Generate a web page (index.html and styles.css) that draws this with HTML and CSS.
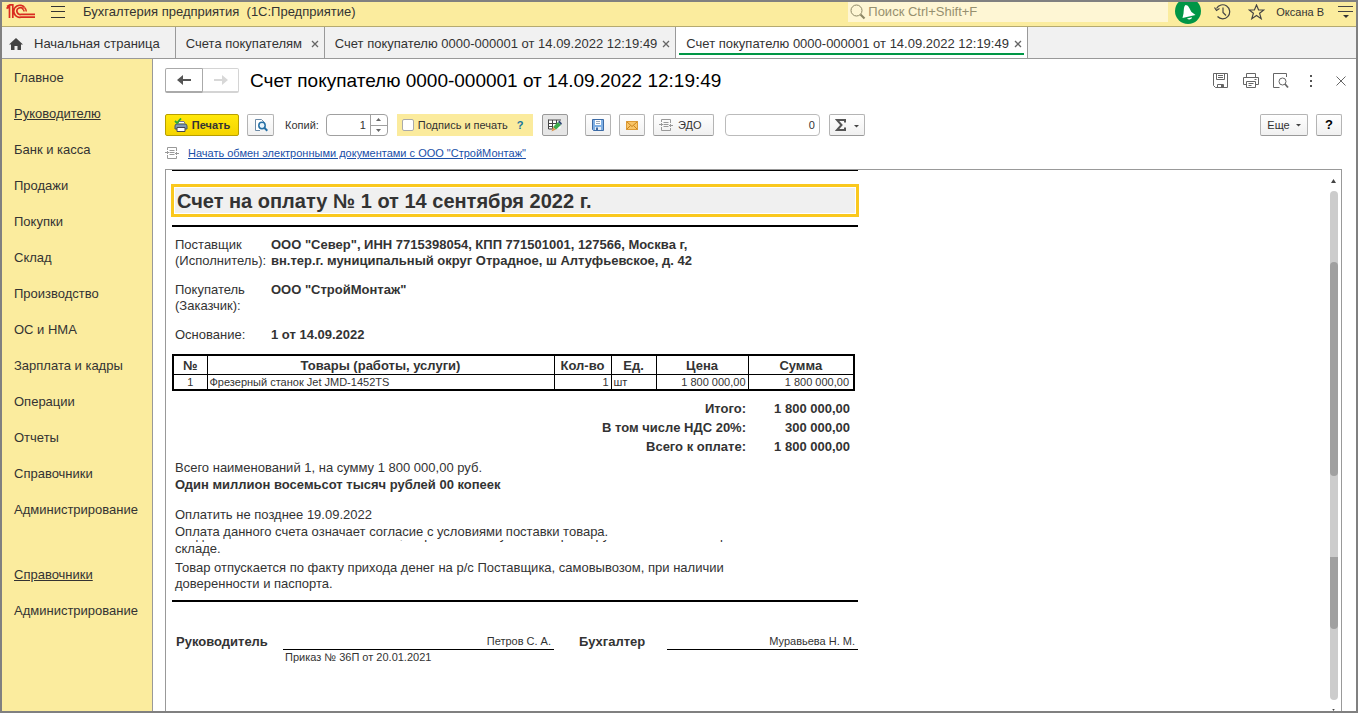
FILE: index.html
```html
<!DOCTYPE html>
<html lang="ru">
<head>
<meta charset="utf-8">
<title>Бухгалтерия предприятия</title>
<link rel="stylesheet" href="styles.css">
</head>
<body>
<svg class="defs" aria-hidden="true">
  <symbol id="i-edo" viewBox="0 0 14 12"><path d="M2.500 3V.5h9V4M2.500 8v3.500h9V9M4.500 3.500h5M4.500 5.500h5M4.500 7.500h5M0 5.500h4M10 6.500h4M2.500 4v3M11.500 5v3" fill="none" stroke="#999"/></symbol>
  <symbol id="i-close" viewBox="0 0 8 8"><path d="M1 1l6 6M7 1L1 7" fill="none" stroke="#666" stroke-width="1.300"/></symbol>
</svg>
<div class="app">
  <header class="topbar">
    <svg class="logo" width="30" height="16" viewBox="0 0 30 16"><g fill="none" stroke="#d92b20" stroke-width="1.700"><path d="M.5 4.500L3.500 2.500V14M6.800 14V.800H4L1 2.500M18.500 3.500A6 6 0 1 0 15 13.200H29M17.300 5.500A3.400 3.400 0 1 0 15 10.400H29"/><path d="M20.300 7.500A6 6 0 0 0 18.500 3.500M17.300 5.500a3 3 0 0 1 .7 2" stroke-width="1.500"/></g></svg>
    <button class="plain" aria-label="Меню"><svg width="14" height="12" viewBox="0 0 14 12"><path d="M0 .5h14M0 5.500h14M0 11.500h14" stroke="#333"/></svg></button>
    <div class="app-name">Бухгалтерия предприятия &nbsp;(1С:Предприятие)</div>
    <label class="search"><svg width="16" height="16" viewBox="0 0 16 16"><circle cx="6.500" cy="6.500" r="5.500" fill="none" stroke="#8d8765"/><path d="M10.500 10.500l4 4" stroke="#8d8765" stroke-width="2.200"/></svg><input type="text" placeholder="Поиск Ctrl+Shift+F" aria-label="Поиск"></label>
    <button class="bell" aria-label="Уведомления"><svg width="26" height="24" viewBox="0 0 26 24"><circle cx="13" cy="9" r="13" fill="#009646"/><path d="M10.500 3C8.500 4.500 9 8 8.500 11.500L7.500 16L20.500 13L16.500 10C14.500 6.500 13.500 3 10.500 3zM12 16.500l5-1.200c0 2.200-3.500 3-5 1.200z" fill="#fff"/></svg></button>
    <button class="plain history" aria-label="История"><svg width="17" height="16" viewBox="0 0 17 16"><g fill="none" stroke="#444" stroke-width="1.200"><path d="M2.500 4.500A7 7 0 1 1 3.500 12.500M.5 3.500l2 3 3-2M9 3.500V8.500l3 3"/></g></svg></button>
    <button class="plain star" aria-label="Избранное"><svg width="17" height="16" viewBox="0 0 17 16"><path d="M8.500 1l2.100 5h5.200l-4.200 3.300 1.600 5.400-4.700-3.200-4.700 3.200 1.600-5.400L1.200 6h5.200z" fill="none" stroke="#444" stroke-width="1.200"/></svg></button>
    <span class="user">Оксана В</span>
    <button class="plain" aria-label="Сервис"><svg width="15" height="14" viewBox="0 0 15 14"><path d="M0 1.500h15M0 6.500h15" stroke="#444"/><path d="M5 10h6L8 13z" fill="#333"/></svg></button>
  </header>

  <nav class="tabs">
    <a class="tab home" href="#"><svg width="14" height="12" viewBox="0 0 14 12"><path d="M7 0L0 6.500h2V12h3.500V8h3v4H12V6.500h2z" fill="#444"/></svg><span>Начальная страница</span></a>
    <a class="tab" href="#"><span>Счета покупателям</span><svg width="8" height="8"><use href="#i-close"/></svg></a>
    <a class="tab" href="#"><span>Счет покупателю 0000-000001 от 14.09.2022 12:19:49</span><svg width="8" height="8"><use href="#i-close"/></svg></a>
    <a class="tab active" href="#"><span>Счет покупателю 0000-000001 от 14.09.2022 12:19:49</span><svg width="8" height="8"><use href="#i-close"/></svg></a>
  </nav>

  <div class="body">
    <nav class="sidebar">
      <a href="#">Главное</a>
      <a href="#" class="underlined">Руководителю</a>
      <a href="#">Банк и касса</a>
      <a href="#">Продажи</a>
      <a href="#">Покупки</a>
      <a href="#">Склад</a>
      <a href="#">Производство</a>
      <a href="#">ОС и НМА</a>
      <a href="#">Зарплата и кадры</a>
      <a href="#">Операции</a>
      <a href="#">Отчеты</a>
      <a href="#">Справочники</a>
      <a href="#">Администрирование</a>
      <a href="#" class="underlined second">Справочники</a>
      <a href="#">Администрирование</a>
    </nav>

    <main class="main">
      <div class="title-row">
        <div class="history-nav">
          <button aria-label="Назад"><svg width="14" height="10" viewBox="0 0 14 10"><path d="M0 5l6-5v4h8v2H6v4z" fill="#555"/></svg></button>
          <button aria-label="Вперед" disabled><svg width="14" height="10" viewBox="0 0 14 10"><path d="M14 5L8 0v4H0v2h8v4z" fill="#d8d8d8"/></svg></button>
        </div>
        <h1>Счет покупателю 0000-000001 от 14.09.2022 12:19:49</h1>
        <div class="window-tools">
          <button class="plain" aria-label="Сохранить"><svg width="16" height="16" viewBox="0 0 16 16"><path d="M.5.5h14v14h-12l-2-2zM3.500.5v6h8v-6M5 2.500h5M5 4.500h5M4.500 14.500v-3h6v3" fill="none" stroke="#666"/><path d="M8 12h2v2H8z" fill="#666"/></svg></button>
          <button class="plain" aria-label="Печать"><svg width="16" height="16" viewBox="0 0 16 16"><path d="M3.500 4.500v-4h9v4M3.500 11.500H.5v-7h15v7h-3M3.500 8.500h9v6h-9zM5.500 10.500h5M5.500 12.500h3M11.500 6.500h2" fill="none" stroke="#666"/></svg></button>
          <button class="plain" aria-label="Просмотр"><svg width="16" height="16" viewBox="0 0 16 16"><path d="M13.500 4V.5H.5v14h6" fill="none" stroke="#666"/><circle cx="9.500" cy="8.500" r="3.500" fill="none" stroke="#666"/><path d="M12 11l3 3.500" stroke="#666" stroke-width="1.800"/></svg></button>
          <button class="plain dots" aria-label="Еще"><svg width="4" height="12" viewBox="0 0 4 12"><path d="M1 0h2v2H1zM1 5h2v2H1zM1 10h2v2H1z" fill="#555"/></svg></button>
          <button class="plain shut" aria-label="Закрыть"><svg width="10" height="10" viewBox="0 0 10 10"><path d="M.5.5l9 9M9.500.5l-9 9" stroke="#666"/></svg></button>
        </div>
      </div>

      <div class="toolbar">
        <button class="btn print"><svg width="14" height="14" viewBox="0 0 14 14"><path d="M4 5.500L5 3.500h5l1 2" fill="#fff" stroke="#778"/><path d="M1 8q0-2 2-2h8q2 0 2 2v3H1z" fill="#7f99b2" stroke="#40566c"/><path d="M3 9.500h8v4H3z" fill="#fff" stroke="#445"/><path d="M1 3l2 2 4-4.500" fill="none" stroke="#27ab35" stroke-width="1.800"/></svg>Печать</button>
        <button class="btn preview" aria-label="Предварительный просмотр"><svg width="14" height="14" viewBox="0 0 14 14"><path d="M6 12.500H1.500V1.500h6l3 3" fill="#fff" stroke="#6c8aa6"/><circle cx="8" cy="7.500" r="3.200" fill="#e6f3fb" stroke="#246fa5" stroke-width="1.500"/><path d="M10.300 9.800l3 3" stroke="#246fa5" stroke-width="2"/></svg></button>
        <label class="copies-label" for="copies">Копий:</label>
        <div class="spinner"><input id="copies" type="text" value="1"><div class="steps"><button aria-label="Больше"><svg width="5" height="3" viewBox="0 0 5 3"><path d="M0 3L2.500 0 5 3z" fill="#666"/></svg></button><button aria-label="Меньше"><svg width="5" height="3" viewBox="0 0 5 3"><path d="M0 0l2.500 3L5 0z" fill="#666"/></svg></button></div></div>
        <div class="sign"><label><input type="checkbox">Подпись и печать</label><button class="plain hint">?</button></div>
        <button class="btn icon pressed" aria-label="Редактирование"><svg width="14" height="14" viewBox="0 0 14 14"><path d="M.5 1.500h12v9H.5z" fill="#fff"/><path d="M.5 2h12.500M.5 5.500H9M.5 8.500H5M.5 1.500v9.500M4.500 2v9M8.500 2v4M.5 11h4" fill="none" stroke="#444"/><path d="M5 9l5-5 3 3-5 4.500z" fill="#3dac4c"/><path d="M5 9l3 2.500L3.500 13.500z" fill="#d99650"/><path d="M10 4l1.500-1.500 2.500 3L13 7z" fill="#354b78"/></svg></button>
        <button class="btn icon save" aria-label="Сохранить"><svg width="12" height="12" viewBox="0 0 12 12"><path d="M.5.5h11v11h-10l-1-1z" fill="#7fb0e4" stroke="#3c6ba6"/><path d="M3 1h6v5H3z" fill="#fff"/><path d="M4 2.500h4M4 4.500h4" stroke="#9ab"/><path d="M3 8h6v3H3z" fill="#e7edf4"/><path d="M4 8.500h2V11H4z" fill="#3c6ba6"/></svg></button>
        <button class="btn icon" aria-label="Отправить"><svg width="12" height="9" viewBox="0 0 12 9"><path d="M.5.5h11v8H.5z" fill="#f9c466" stroke="#dd9a34"/><path d="M.5.5L6 5.500 11.500.5M.5 8.500L4.500 4.500M11.500 8.500L7.500 4.500" fill="none" stroke="#c98520"/></svg></button>
        <button class="btn edo"><svg width="14" height="12"><use href="#i-edo"/></svg>ЭДО</button>
        <input class="sum" type="text" value="0" aria-label="Сумма">
        <button class="btn sigma" aria-label="Сумма"><svg width="24" height="12" viewBox="0 0 24 12"><path d="M10 3.500V1H2l4.500 5L2 11h8V8.500" fill="none" stroke="#555" stroke-width="2"/><path d="M19 6h5l-2.500 2.500z" fill="#444"/></svg></button>
        <button class="btn more">Еще<svg width="5" height="3" viewBox="0 0 5 3"><path d="M0 0h5L2.500 2.500z" fill="#444"/></svg></button>
        <button class="btn icon help">?</button>
      </div>

      <div class="exchange"><svg width="14" height="12"><use href="#i-edo"/></svg><a href="#">Начать обмен электронными документами с ООО "СтройМонтаж"</a></div>

      <section class="viewer">
        <article class="sheet">
          <h2>Счет на оплату № 1 от 14 сентября 2022 г.</h2>
          <dl class="parties">
            <dt>Поставщик<br>(Исполнитель):</dt><dd>ООО "Север", ИНН 7715398054, КПП 771501001, 127566, Москва г,<br>вн.тер.г. муниципальный округ Отрадное, ш Алтуфьевское, д. 42</dd>
            <dt>Покупатель<br>(Заказчик):</dt><dd>ООО "СтройМонтаж"</dd>
            <dt>Основание:</dt><dd>1 от 14.09.2022</dd>
          </dl>
          <table class="goods">
            <colgroup><col class="c-num"><col><col class="c-qty"><col class="c-unit"><col class="c-price"><col class="c-total"></colgroup>
            <thead><tr><th>№</th><th>Товары (работы, услуги)</th><th>Кол-во</th><th>Ед.</th><th>Цена</th><th>Сумма</th></tr></thead>
            <tbody><tr><td class="mid">1</td><td>Фрезерный станок Jet JMD-1452TS</td><td class="num">1</td><td>шт</td><td class="num">1 800 000,00</td><td class="num wide">1 800 000,00</td></tr></tbody>
          </table>
          <dl class="totals">
            <dt>Итого:</dt><dd>1 800 000,00</dd>
            <dt>В том числе НДС 20%:</dt><dd>300 000,00</dd>
            <dt>Всего к оплате:</dt><dd>1 800 000,00</dd>
          </dl>
          <div class="summary">
            <p>Всего наименований 1, на сумму 1 800 000,00 руб.</p>
            <p class="words">Один миллион восемьсот тысяч рублей 00 копеек</p>
          </div>
          <div class="terms">
            <p>Оплатить не позднее 19.09.2022</p>
            <p>Оплата данного счета означает согласие с условиями поставки товара.</p>
            <p class="clipped"><span>Уведомление об оплате обязательно, в противном случае не гарантируется наличие товара на</span></p>
            <p>складе.</p>
            <p class="release">Товар отпускается по факту прихода денег на р/с Поставщика, самовывозом, при наличии<br>доверенности и паспорта.</p>
          </div>
          <div class="signatures">
            <b>Руководитель</b><span class="line">Петров С. А.</span>
            <b class="second">Бухгалтер</b><span class="line">Муравьева Н. М.</span>
            <small>Приказ № 36П от 20.01.2021</small>
          </div>
        </article>
        <div class="scroll">
          <svg width="5" height="4" viewBox="0 0 5 4"><path d="M0 4L2.500 0 5 4z" fill="#444"/></svg>
          <div class="track"><div class="thumb"></div><div class="thumb lower"></div></div>
          <svg class="down" width="5" height="4" viewBox="0 0 5 4"><path d="M0 0h5L2.500 4z" fill="#444"/></svg>
        </div>
      </section>
    </main>
  </div>
</div>
</body>
</html>
```
FILE: styles.css
```css
* { box-sizing: border-box; }
body { margin: 0; font: 13px/16px "Liberation Sans", Arial, sans-serif; color: #333; }
button, input { font: inherit; color: inherit; }
a { color: inherit; text-decoration: none; }
h1, h2, p, dl, dd { margin: 0; }
svg { display: block; flex: none; }
.defs { position: absolute; width: 0; height: 0; }
.plain { background: none; border: 0; padding: 0; }

.app { height: 100vh; display: flex; flex-direction: column; border: 2px solid #808080; overflow: hidden; background: #fff; }
.topbar { flex: none; height: 25px; display: flex; align-items: center; padding: 0 3px 4px 4px; background: #fbec9e; border-bottom: 1px solid #b5aa70; }
.logo { margin-right: 15px; }
.app-name { margin-left: 18px; white-space: nowrap; }
.search { display: flex; align-items: center; gap: 2px; width: 320px; height: 20px; margin-left: auto; padding-left: 2px; background: #fef6d4; }
.search input { flex: 1; min-width: 0; border: 0; padding: 0; background: none; }
.search input::placeholder { color: #96906f; opacity: 1; }
.bell { align-self: flex-start; border: 0; padding: 0; background: none; margin: 0 13px 0 7px; }
.history { margin-right: 17px; }
.star { margin-right: 11px; }
.user { font-size: 11px; margin-right: 14px; white-space: nowrap; }

.tabs { flex: none; height: 32px; display: flex; background: #f1f1f1; border-bottom: 1px solid #999; }
.tab { display: flex; align-items: center; justify-content: space-between; gap: 5px; min-width: 149px; padding: 2px 5px 0 10px; border-right: 1px solid #999; white-space: nowrap; }
.tab.home { justify-content: flex-start; gap: 11px; padding: 2px 15px 0 7px; }
.tab.active { background: linear-gradient(#009646, #009646) 3px 26px / calc(100% - 6px) 2px no-repeat #fff; }

.body { flex: 1; min-height: 0; display: flex; }
.sidebar { flex: none; width: 151px; display: flex; flex-direction: column; gap: 20px; padding: 11px 12px; background: #fbec9e; border-right: 1px solid #999; white-space: nowrap; }
.underlined { text-decoration: underline; }
.sidebar .second { margin-top: 29px; }

.main { flex: 1; min-width: 0; display: flex; flex-direction: column; padding: 9px 14px 0 12px; }
.title-row { display: flex; align-items: center; height: 25px; }
.history-nav { display: flex; margin-right: 11px; }
.history-nav button { width: 38px; height: 25px; display: grid; place-items: center; padding: 0; background: #fff; border: 1px solid #aaa; border-bottom-width: 2px; border-radius: 2px 0 0 2px; }
.history-nav button:disabled { width: 37px; margin-left: -1px; border-color: #d4d4d4; border-left-color: #aaa; border-radius: 0 2px 2px 0; }
h1 { font-size: 19px; line-height: 24px; font-weight: 400; color: #000; white-space: nowrap; }
.window-tools { display: flex; align-items: center; gap: 14px; margin-left: auto; }
.dots { margin-left: 6px; }
.shut { margin: 0 -4px 0 9px; }

.toolbar { display: flex; align-items: center; margin-top: 21px; font-size: 11px; }
.btn { height: 22px; display: flex; align-items: center; justify-content: center; padding: 0; background: linear-gradient(#fff, #f0f0f0); border: 1px solid #b4b4b4; border-bottom-color: #999; border-radius: 2px; }
.icon { width: 26px; }
.print { width: 74px; gap: 4px; font-weight: 700; background: linear-gradient(#ffe80a, #f5d400); border-color: #b89f00; }
.preview { width: 27px; margin-left: 8px; }
.copies-label { margin-left: 11px; }
.spinner { display: flex; width: 62px; height: 22px; margin: 0 9px 0 7px; border: 1px solid #a0a0a0; border-radius: 4px; }
.spinner input { flex: 1; min-width: 0; border: 0; padding: 0 4px; background: none; text-align: right; }
.steps { width: 17px; display: flex; flex-direction: column; border-left: 1px solid #a0a0a0; }
.steps button { flex: 1; display: grid; place-items: center; padding: 0; border: 0; background: none; }
.steps button + button { border-top: 1px solid #a0a0a0; }
.sign { display: flex; align-items: center; gap: 9px; width: 136px; height: 22px; padding-left: 5px; background: #fbeb9d; white-space: nowrap; }
.sign label { display: flex; align-items: center; gap: 4px; }
.sign input { appearance: none; width: 12px; height: 12px; margin: 0; background: #fff; border: 1px solid #aaa; border-radius: 2px; }
.hint { color: #16739c; font-weight: 700; }
.pressed { margin-left: 9px; background: #e6e6e6; border-color: #999; }
.save { margin: 0 8px 0 17px; }
.edo { width: 61px; gap: 5px; margin-left: 8px; padding-right: 6px; }
.sum { width: 95px; height: 22px; margin: 0 9px 0 11px; padding: 0 4px; border: 1px solid #bbb; border-radius: 4px; text-align: right; }
.sigma { width: 36px; }
.more { width: 48px; gap: 6px; margin-left: auto; }
.help { margin-left: 8px; font-size: 13px; font-weight: 700; color: #000; }

.exchange { display: flex; align-items: center; gap: 9px; height: 16px; margin: 9px 0 8px; font-size: 11px; }
.exchange a { color: #1a4fa8; text-decoration: underline; }

.viewer { flex: 1; min-height: 0; display: flex; justify-content: space-between; padding: 0 3px 0 6px; border: 1px solid #999; border-bottom: 0; }
.sheet { width: 100%; max-width: 686px; border-top: 1px solid #000; }
h2 { height: 33px; margin: 13px -1px 8px; padding: 0 3px; background: #f0f0f0; border: 3px solid #fac81e; box-shadow: inset 0 0 0 1px #fff; font-size: 20px; line-height: 28px; white-space: nowrap; }
.parties { display: grid; grid-template-columns: 96px 1fr; row-gap: 13px; padding: 10px 3px 0; border-top: 2px solid #000; white-space: nowrap; }
.parties dd { font-weight: 700; }
.goods { width: calc(100% - 3px); margin-top: 11px; border-collapse: collapse; table-layout: fixed; border: 2px solid #000; }
.goods th, .goods td { border: 1px solid #000; white-space: nowrap; }
.goods th { height: 18px; padding: 2px 0 0; line-height: 16px; }
.goods td { height: 14px; padding: 0 2px; font-size: 11px; line-height: 14px; }
.goods .mid { text-align: center; }
.goods .num { text-align: right; }
.goods .wide { padding-right: 4px; }
.c-num { width: 34px; }
.c-qty { width: 57px; }
.c-unit { width: 45px; }
.c-price { width: 92px; }
.c-total { width: 106px; }
.totals { display: grid; grid-template-columns: 1fr 104px; padding: 8px 8px 0 0; font-weight: 700; line-height: 19px; text-align: right; }
.summary, .terms { padding-left: 3px; line-height: 17px; white-space: nowrap; }
.summary { margin-top: 3px; }
.words { font-weight: 700; }
.terms { margin-top: 13px; padding-bottom: 8px; border-bottom: 2px solid #000; }
.clipped { display: flex; align-items: flex-end; height: 2px; margin-bottom: -2px; overflow: hidden; }
.clipped span { line-height: 14px; }
.release { margin-top: 3px; line-height: 16px; }
.signatures { display: grid; grid-template-columns: 107px 271px 113px 1fr; margin-top: 31px; padding-left: 4px; }
.signatures .second { margin-left: 25px; }
.signatures b { line-height: 17px; }
.signatures .line { border-bottom: 1px solid #000; padding-right: 3px; font-size: 11px; text-align: right; }
.signatures small { grid-column: 2; padding-left: 2px; font-size: 11px; line-height: 15px; }

.scroll { width: 9px; display: flex; flex-direction: column; align-items: center; padding-top: 9px; }
.track { position: relative; flex: 1; width: 8px; margin: 8px 0 9px; background: #ccc; border-radius: 4px; overflow: hidden; }
.thumb { position: absolute; top: 14%; left: 0; width: 100%; height: 42%; background: #a0a0a0; border-radius: 4px; }
.thumb.lower { top: 72%; height: 14%; border-radius: 0 0 4px 4px; }
.down { height: 2px; }
```
